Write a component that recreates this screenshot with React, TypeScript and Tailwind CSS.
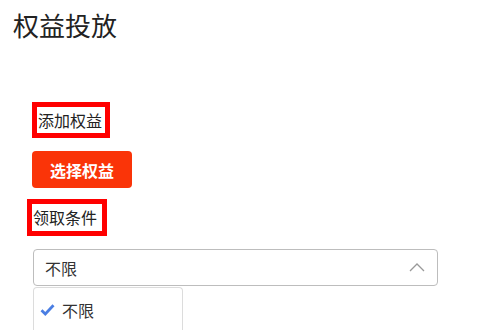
export default function App() {
  return (
    <div
      className="h-[330px] overflow-hidden bg-white text-[#222]"
      style={{ fontFamily: '"Noto Sans CJK SC", "Noto Sans", sans-serif' }}
    >
      <h1 className="pt-[12px] pl-[13px] text-[26px] leading-[26px] font-normal">权益投放</h1>

      <div className="pl-[32px] pt-[64px] flex flex-col items-start">
        {/* highlighted label */}
        <div className="h-[36px] border-[5px] border-[#ff0000] pl-[1px] pr-[3px] text-[16px] leading-[26px]">
          添加权益
        </div>

        <button className="mt-[13px] h-[37px] w-[100px] rounded-[4px] bg-[#fa3408] text-[16px] font-bold text-white">
          选择权益
        </button>

        <div className="mt-[11px] -ml-[5px] h-[37px] border-[5px] border-[#ff0000] pl-[1px] pr-[5px] text-[16px] leading-[27px]">
          领取条件
        </div>

        <div className="mt-[13px] ml-[1px] flex h-[37px] w-[405px] items-center justify-between rounded-[4px] border border-[#bdbdbd] pl-[11px] pr-[12px] text-[16px] text-[#333]">
          <span>不限</span>
          <svg width="16" height="10" viewBox="0 0 16 10" fill="none" className="mt-[-2px]">
            <path d="M1 9 L8 2 L15 9" stroke="#999" strokeWidth="1.3" />
          </svg>
        </div>

        <div className="mt-[1px] ml-[1px] h-[43px] w-[150px] rounded-t-[4px] border border-b-0 border-[#dcdcdc] bg-white">
          <div className="flex h-[44px] items-center pl-[6px] text-[16px] text-[#333]">
            <svg width="15" height="12" viewBox="0 0 15 12" className="mr-[7px]">
              <path d="M1.5 6.3 L5.3 10 L13.5 1.3" stroke="#4a7ee3" strokeWidth="2.8" fill="none" />
            </svg>
            <span>不限</span>
          </div>
        </div>
      </div>
    </div>
  );
}
